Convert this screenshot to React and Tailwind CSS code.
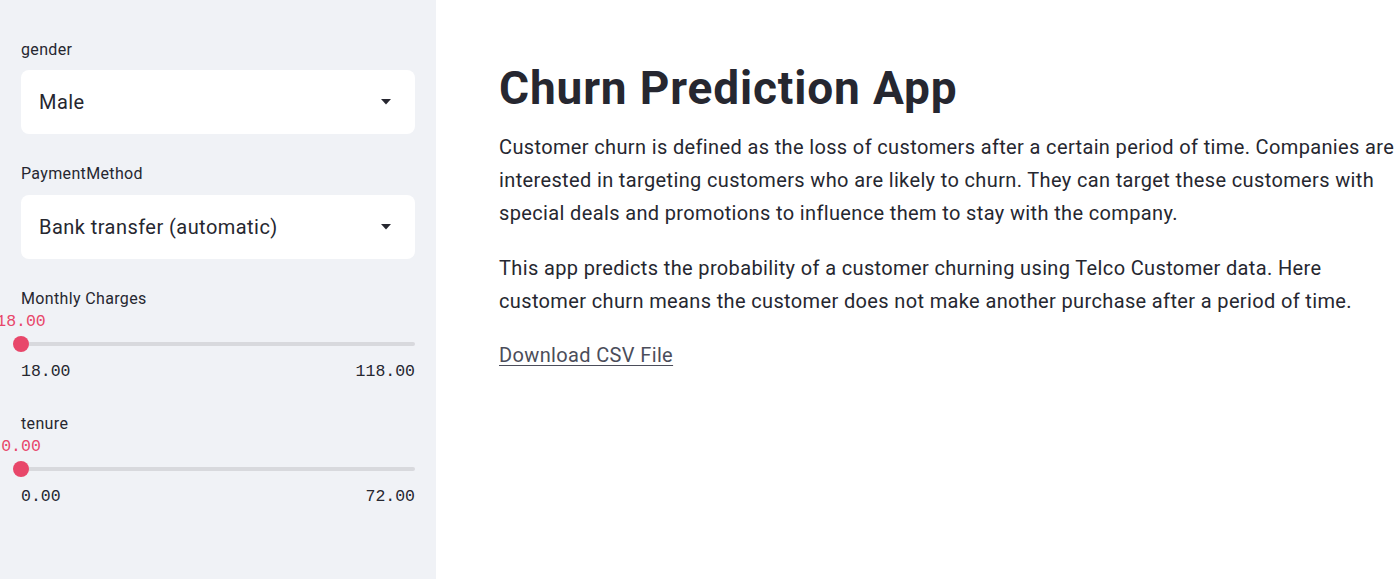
import React from "react";

function Caret() {
  return (
    <svg width="10" height="6" viewBox="0 0 10 6" className="shrink-0">
      <path d="M0 0 L10 0 L5 5.5 Z" fill="#262730" />
    </svg>
  );
}

function SelectBox({ label, value, labelGap }) {
  return (
    <div className="flex flex-col">
      <div className="h-[20px] leading-[20px] text-[16px] tracking-[0.35px] text-[#262730]">{label}</div>
      <div className={"h-[64px] bg-white rounded-[8px] flex items-center justify-between pl-[18px] pr-[24px] " + labelGap}>
        <span className="text-[20px] tracking-[0.45px] text-[#262730]">{value}</span>
        <Caret />
      </div>
    </div>
  );
}

function Slider({ label, value, min, max }) {
  return (
    <div className="flex flex-col">
      <div className="h-[20px] leading-[20px] text-[16px] tracking-[0.35px] text-[#262730]">{label}</div>
      <div className="relative mt-[3px] h-[20px]">
        <span
          className="absolute left-0 top-0 -translate-x-1/2 leading-[20px] text-[16.5px] text-[#e8476a]"
          style={{ fontFamily: '"Liberation Mono", monospace' }}
        >
          {value}
        </span>
      </div>
      <div className="relative mt-[4px] h-[16px] flex items-center">
        <div className="w-full h-[4px] bg-[#d8d9dd] rounded-full" />
        <div className="absolute left-[-8px] top-0 w-[16px] h-[16px] rounded-full bg-[#e8476a]" />
      </div>
      <div
        className="mt-[10px] h-[20px] leading-[20px] flex justify-between text-[16.5px] text-[#262730]"
        style={{ fontFamily: '"Liberation Mono", monospace' }}
      >
        <span>{min}</span>
        <span>{max}</span>
      </div>
    </div>
  );
}

export default function App() {
  return (
    <div
      className="w-[1400px] h-[579px] flex bg-white overflow-hidden text-[#262730]"
      style={{ fontFamily: 'Roboto, "Noto Sans", sans-serif' }}
    >
      <aside className="w-[436px] shrink-0 h-full bg-[#f0f2f6] px-[21px] pt-[40px] flex flex-col gap-[30px]">
        <SelectBox label="gender" value="Male" labelGap="mt-[10px]" />
        <SelectBox label="PaymentMethod" value="Bank transfer (automatic)" labelGap="mt-[11px]" />
        <div className="flex flex-col gap-[32px]">
          <Slider label="Monthly Charges" value="18.00" min="18.00" max="118.00" />
          <Slider label="tenure" value="0.00" min="0.00" max="72.00" />
        </div>
      </aside>
      <main className="flex-1 pl-[63px] pt-[60px]">
        <h1 className="text-[46px] leading-[56px] font-bold tracking-[0.85px] text-[#262730]">Churn Prediction App</h1>
        <p className="mt-[14.5px] text-[20px] leading-[33px] tracking-[0.36px] text-[#262730] whitespace-nowrap">
          Customer churn is defined as the loss of customers after a certain period of time. Companies are
          <br />
          interested in targeting customers who are likely to churn. They can target these customers with
          <br />
          special deals and promotions to influence them to stay with the company.
        </p>
        <p className="mt-[22px] text-[20px] leading-[33px] tracking-[0.36px] text-[#262730] whitespace-nowrap">
          This app predicts the probability of a customer churning using Telco Customer data. Here
          <br />
          customer churn means the customer does not make another purchase after a period of time.
        </p>
        <p className="mt-[21px] text-[20px] leading-[33px] tracking-[0.36px]">
          <a href="#" className="underline text-[#4b4d5a] decoration-1 underline-offset-[3px]">Download CSV File</a>
        </p>
      </main>
    </div>
  );
}
